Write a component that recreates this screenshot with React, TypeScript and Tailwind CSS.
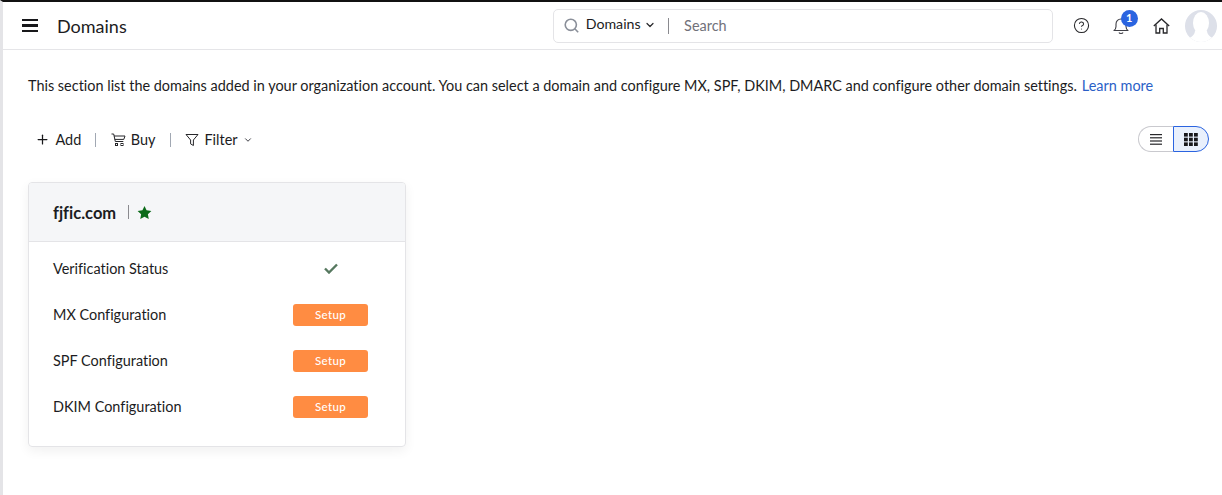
import { ChevronDown, HelpCircle, Plus } from 'lucide-react';

const rows = ['MX Configuration', 'SPF Configuration', 'DKIM Configuration'];

function SetupButton() {
  return (
    <button className="w-[75px] h-[22px] bg-[#ff8c42] rounded-[3px] text-white text-[11.5px] font-medium tracking-[0.3px] flex items-center justify-center">
      Setup
    </button>
  );
}

function CartIcon() {
  return (
    <svg width="15" height="14" viewBox="0 0 15 14" fill="none" stroke="#27272a" strokeWidth="1">
      <path d="M0.5 1h2.2l1.6 7.5h8" />
      <path d="M3 3h11l-1.2 3.4H3.8" />
      <rect x="4.5" y="10.5" width="2" height="2" />
      <rect x="10" y="10.5" width="2" height="2" />
    </svg>
  );
}

function FilterIcon() {
  return (
    <svg width="14" height="14" viewBox="0 0 14 14" fill="none" stroke="#27272a" strokeWidth="1">
      <path d="M1 1.5h12L8.4 7v5.5l-2.8-1.6V7z" strokeLinejoin="round" />
    </svg>
  );
}

function BellIcon() {
  return (
    <svg width="16" height="18" viewBox="0 0 16 18" fill="none" stroke="#3f3f46" strokeWidth="1.1">
      <path d="M1 13.5c1.4-1 2-2 2-4V7a5 5 0 0 1 10 0v2.5c0 2 .6 3 2 4z" strokeLinejoin="round" />
      <path d="M6 15.5c.4 1.4 3.6 1.4 4 0" />
    </svg>
  );
}

function HomeIcon() {
  return (
    <svg width="17" height="16" viewBox="0 0 17 16" fill="none" stroke="#27272a" strokeWidth="1.3">
      <path d="M0.8 8 8.5 1l7.700 7" />
      <path d="M3 6.500v8.500h3.700v-4.500h3.600V15H14V6.500" />
    </svg>
  );
}

function Avatar() {
  return (
    <svg width="32" height="32" viewBox="0 0 32 32">
      <defs>
        <clipPath id="avatar-clip">
          <circle cx="16" cy="16" r="16" />
        </clipPath>
      </defs>
      <circle cx="16" cy="16" r="16" fill="#dde0e9" />
      <g clipPath="url(#avatar-clip)" fill="#ffffff">
        <ellipse cx="16" cy="13" rx="8" ry="11" />
        <path d="M10 21h12c.5 4 3 6 8 8v3H2v-3c5-2 7.500-4 8-8z" />
      </g>
    </svg>
  );
}

function ListIcon() {
  return (
    <svg width="12" height="11" viewBox="0 0 12 11" fill="#27272a">
      <rect y="0" width="12" height="1.2" />
      <rect y="3.2" width="12" height="1.2" />
      <rect y="6.400" width="12" height="1.2" />
      <rect y="9.600" width="12" height="1.2" />
    </svg>
  );
}

function GridIcon() {
  return (
    <svg width="14" height="13" viewBox="0 0 14 13" fill="#18181b">
      {[0, 5, 10].map((x) =>
        [0, 4.700, 9.400].map((y) => <rect key={`${x}-${y}`} x={x} y={y} width="3.800" height="3.600" />),
      )}
    </svg>
  );
}

export default function App() {
  return (
    <div
      className="h-[495px] w-[1222px] overflow-hidden bg-white border-t-2 border-t-[#111111] border-l-[3px] border-l-[#e4e4e7] text-[14.44px] text-[#1c1c22] [font-variant-ligatures:none]"
      style={{ fontFamily: 'Lato, "Open Sans", sans-serif' }}
    >
      {/* top bar */}
      <header className="h-[48px] border-b border-[#e5e5e8] flex items-center">
        <div className="ml-[19px] w-[16px] flex flex-col gap-[3px]">
          <span className="h-[2.500px] bg-[#18181b]" />
          <span className="h-[2.500px] bg-[#18181b]" />
          <span className="h-[2.500px] bg-[#18181b]" />
        </div>
        <h1 className="ml-[19px] mt-[2px] text-[18px] font-normal">Domains</h1>

        <div className="ml-[426px] w-[500px] h-[34px] border border-[#e4e4e7] rounded-[5px] flex items-center">
          <svg className="ml-[10px]" width="15" height="15" viewBox="0 0 15 15" fill="none" stroke="#8a8f99" strokeWidth="1.6">
            <circle cx="6.800" cy="6.800" r="5.600" />
            <path d="m10.800 10.800 3.400 3.400" />
          </svg>
          <span className="ml-[7px] text-[14.2px] -mt-[3px]">Domains</span>
          <ChevronDown size={12} strokeWidth={2.4} className="ml-[3px] -mt-[1px] text-[#27272a]" />
          <span className="ml-[12px] w-px h-[16px] bg-[#8a8a8f]" />
          <span className="ml-[15.500px] text-[#71717a]">Search</span>
        </div>

        <HelpCircle size={17} strokeWidth={1.5} className="ml-[20px] text-[#27272a]" />
        <div className="relative ml-[23px] w-[16px] h-[18px]">
          <BellIcon />
          <span className="absolute -top-[7px] left-[8px] w-[17px] h-[17px] rounded-full bg-[#2b64e0] text-white text-[11px] font-bold flex items-center justify-center">
            1
          </span>
        </div>
        <div className="ml-[24px] flex">
          <HomeIcon />
        </div>
        <div className="ml-[15px] flex">
          <Avatar />
        </div>
      </header>

      <main className="pl-[25px]">
        <p className="mt-[26px] leading-[20px]">
          This section list the domains added in your organization account. You can select a domain and configure MX, SPF, DKIM, DMARC and configure other domain settings.
          <a className="ml-[5px] text-[#2b5fc7]">Learn more</a>
        </p>

        {/* toolbar */}
        <div className="mt-[30px] h-[26px] flex items-center">
          <div className="mt-[1px] flex items-center">
            <Plus size={15} strokeWidth={2} className="ml-[7px] text-[#18181b]" />
            <span className="ml-[5.500px]">Add</span>
            <span className="ml-[14px] w-px h-[14px] bg-[#a1a8b3]" />
            <span className="ml-[14.500px] flex">
              <CartIcon />
            </span>
            <span className="ml-[5px]">Buy</span>
            <span className="ml-[15px] w-px h-[14px] bg-[#a1a8b3]" />
            <span className="ml-[14px] flex">
              <FilterIcon />
            </span>
            <span className="ml-[5px]">Filter</span>
            <ChevronDown size={10} strokeWidth={2.4} className="ml-[5px] text-[#3f3f46]" />
          </div>

          <div className="ml-auto mr-[13px] w-[71px] h-[26px] flex">
            <div className="w-[35px] border border-r-0 border-[#c9c9ce] rounded-l-full flex items-center justify-center">
              <ListIcon />
            </div>
            <div className="w-[36px] border border-[#2b64e0] rounded-r-full bg-[#e9f0fc] flex items-center justify-center">
              <GridIcon />
            </div>
          </div>
        </div>

        {/* domain card */}
        <div className="mt-[30px] w-[378px] h-[265px] border border-[#e4e4e7] rounded-[4px] shadow-[0_4px_12px_rgba(0,0,0,0.06)] overflow-hidden">
          <div className="h-[59px] bg-[#f5f6f8] border-b border-[#e4e4e7] flex items-center pl-[24px]">
            <span className="mt-[2px] text-[16.5px] font-bold">fjfic.com</span>
            <span className="ml-[12px] w-px h-[14px] bg-[#8a8a8f]" />
            <svg className="ml-[8px]" width="15" height="15" viewBox="0 0 24 24" fill="#0c6b1a">
              <path d="M12 1.500 15.300 8.500l7.700 1-5.600 5.300 1.400 7.700L12 18.800l-6.800 3.700 1.400-7.700L1 9.500l7.700-1z" />
            </svg>
          </div>
          <div className="pt-[4px] pl-[24px] pr-[37px]">
            <div className="h-[46px] flex items-center justify-between">
              <span>Verification Status</span>
              <span className="w-[75px] flex justify-center -mt-[2px]">
                <svg width="14" height="11" viewBox="0 0 14 11" fill="none" stroke="#56785f" strokeWidth="2.400">
                  <path d="m1 5.500 4 4 8-8" />
                </svg>
              </span>
            </div>
            {rows.map((label) => (
              <div key={label} className="h-[46px] flex items-center justify-between">
                <span>{label}</span>
                <SetupButton />
              </div>
            ))}
          </div>
        </div>
      </main>
    </div>
  );
}
